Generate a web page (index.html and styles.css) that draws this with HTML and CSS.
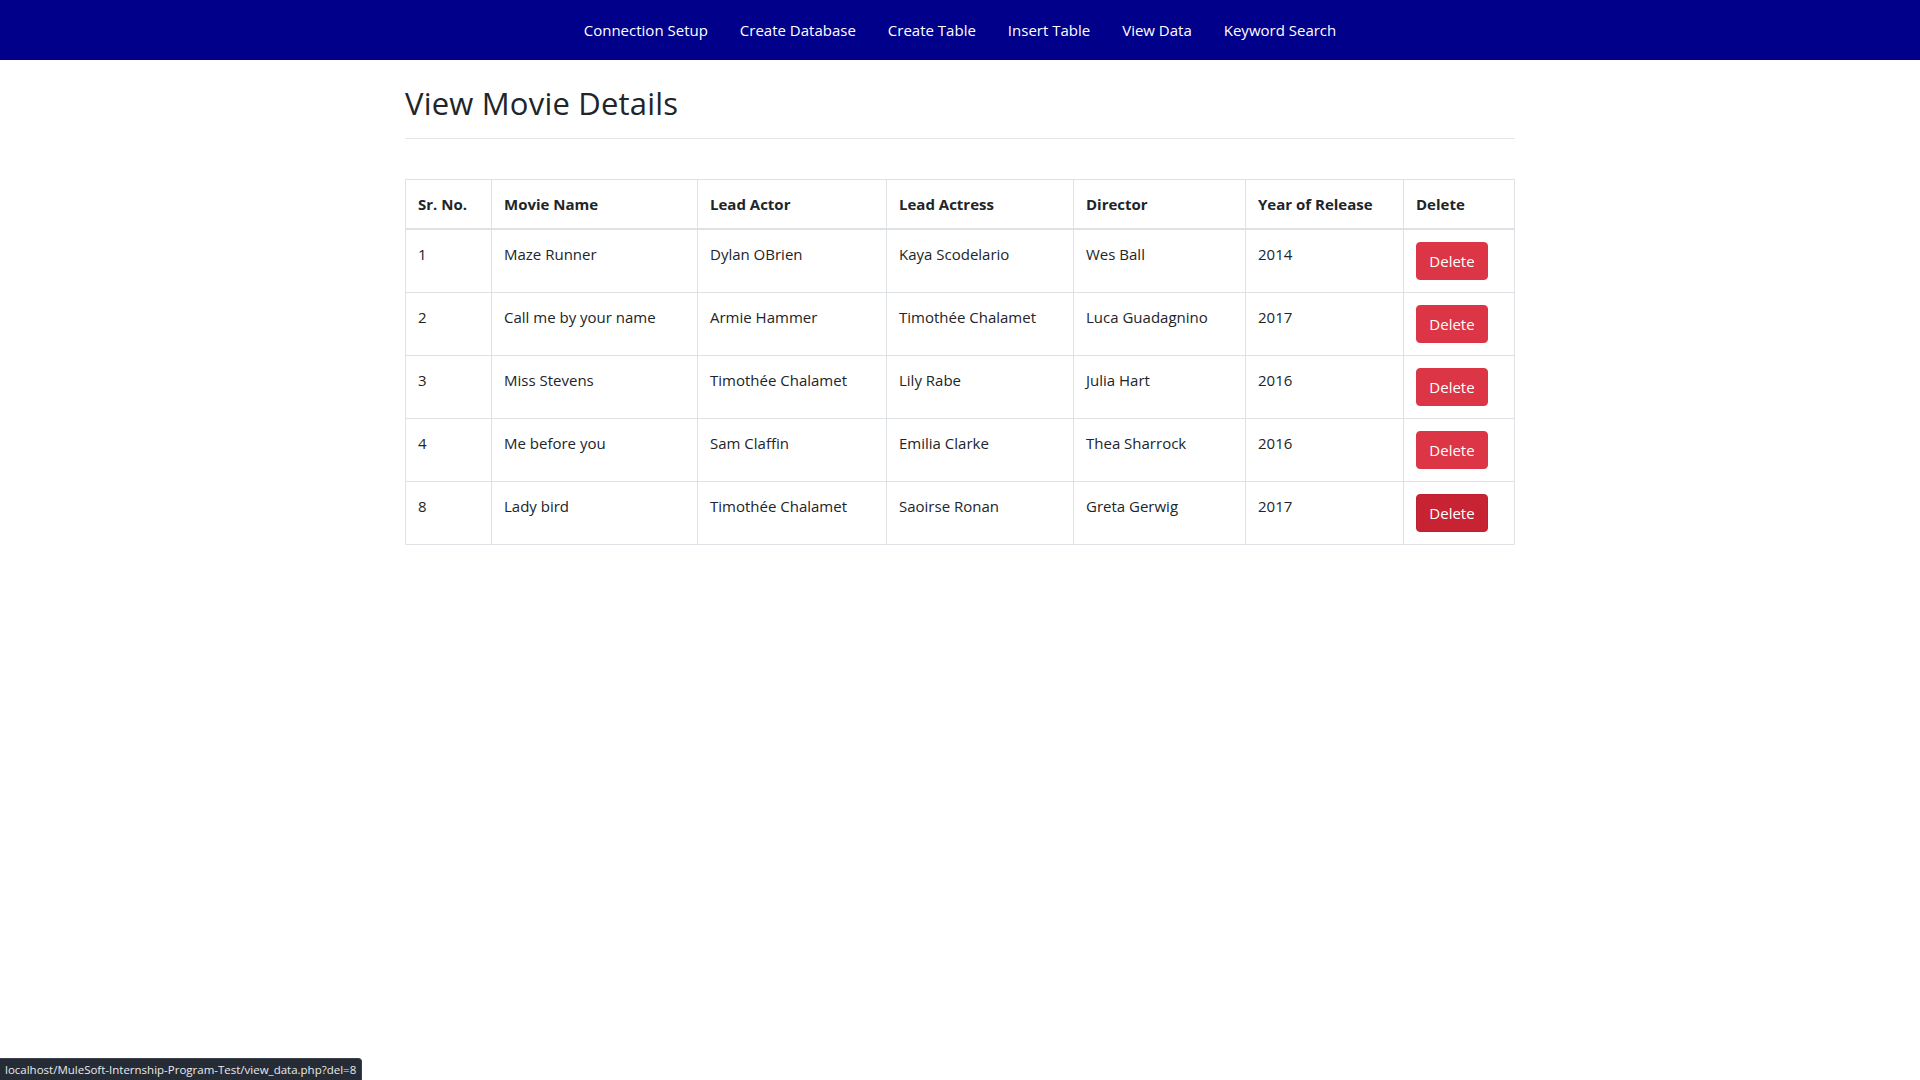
FILE: index.html
```html
<!DOCTYPE html>
<html lang="en">
<head>
<meta charset="utf-8">
<title>View Data</title>
<link rel="stylesheet" href="styles.css">
</head>
<body>
<nav class="navbar">
  <ul class="nav">
    <li><a href="#" class="nav-link">Connection Setup</a></li>
    <li><a href="#" class="nav-link">Create Database</a></li>
    <li><a href="#" class="nav-link">Create Table</a></li>
    <li><a href="#" class="nav-link">Insert Table</a></li>
    <li><a href="#" class="nav-link">View Data</a></li>
    <li><a href="#" class="nav-link">Keyword Search</a></li>
  </ul>
</nav>
<main class="container">
  <h2 class="title">View Movie Details</h2>
  <hr class="rule">
  <table class="table">
    <colgroup>
      <col class="c1"><col class="c2"><col class="c3"><col class="c4"><col class="c5"><col class="c6"><col class="c7">
    </colgroup>
    <thead>
      <tr>
        <th>Sr. No.</th>
        <th>Movie Name</th>
        <th>Lead Actor</th>
        <th>Lead Actress</th>
        <th>Director</th>
        <th>Year of Release</th>
        <th>Delete</th>
      </tr>
    </thead>
    <tbody>
      <tr>
        <td>1</td><td>Maze Runner</td><td>Dylan OBrien</td><td>Kaya Scodelario</td><td>Wes Ball</td><td>2014</td>
        <td><a href="#" class="btn">Delete</a></td>
      </tr>
      <tr>
        <td>2</td><td>Call me by your name</td><td>Armie Hammer</td><td>Timothée Chalamet</td><td>Luca Guadagnino</td><td>2017</td>
        <td><a href="#" class="btn">Delete</a></td>
      </tr>
      <tr>
        <td>3</td><td>Miss Stevens</td><td>Timothée Chalamet</td><td>Lily Rabe</td><td>Julia Hart</td><td>2016</td>
        <td><a href="#" class="btn">Delete</a></td>
      </tr>
      <tr>
        <td>4</td><td>Me before you</td><td>Sam Claffin</td><td>Emilia Clarke</td><td>Thea Sharrock</td><td>2016</td>
        <td><a href="#" class="btn">Delete</a></td>
      </tr>
      <tr>
        <td>8</td><td>Lady bird</td><td>Timothée Chalamet</td><td>Saoirse Ronan</td><td>Greta Gerwig</td><td>2017</td>
        <td><a href="#" class="btn btn-hover">Delete</a></td>
      </tr>
    </tbody>
  </table>
</main>
<div class="statusbar">localhost/MuleSoft-Internship-Program-Test/view_data.php?del=8</div>
</body>
</html>
```

FILE: styles.css
```css
* { box-sizing: border-box; }

html, body {
  margin: 0;
  padding: 0;
  background: #fff;
}

body {
  font-family: "Open Sans", "Noto Sans", sans-serif;
  font-size: 15px;
  line-height: 24px;
  color: #212529;
}

.navbar {
  height: 60px;
  background: #00008b;
  display: flex;
  justify-content: center;
  align-items: center;
}

.nav {
  list-style: none;
  margin: 0;
  padding: 0;
  display: flex;
}

.nav-link {
  display: block;
  padding: 0 16px;
  line-height: 60px;
  color: #fff;
  text-decoration: none;
  font-size: 15px;
}

.container {
  width: 1140px;
  margin: 0 auto;
  padding: 0 15px;
}

.title {
  margin: 24px 0 16px;
  font-size: 31px;
  line-height: 38.4px;
  font-weight: 500;
  letter-spacing: 0.2px;
  color: #212529;
}

.rule {
  margin: 0;
  border: 0;
  border-top: 1px solid rgba(0, 0, 0, 0.1);
  height: 0;
}

.table {
  width: 1109px;
  margin-top: 40px;
  border-collapse: collapse;
  table-layout: fixed;
  border: 1px solid #dee2e6;
}

.c1 { width: 86px; }
.c2 { width: 206px; }
.c3 { width: 189px; }
.c4 { width: 187px; }
.c5 { width: 172px; }
.c6 { width: 158px; }
.c7 { width: 111px; }

.table th,
.table td {
  padding: 12px;
  border: 1px solid #dee2e6;
  text-align: left;
  vertical-align: top;
  white-space: nowrap;
}

.table th {
  vertical-align: bottom;
  border-bottom: 2px solid #dee2e6;
  font-weight: 700;
}

.btn {
  display: inline-block;
  width: 72px;
  height: 38px;
  line-height: 36px;
  text-align: center;
  color: #fff;
  background: #dc3545;
  border: 1px solid #dc3545;
  border-radius: 4px;
  text-decoration: none;
  font-size: 15px;
  vertical-align: top;
}

.btn-hover {
  background: #c82333;
  border-color: #bd2130;
}

.statusbar {
  position: fixed;
  left: 0;
  bottom: 0;
  height: 22px;
  width: 362px;
  padding: 0 5px;
  background: #262c36;
  border-top: 1px solid #3a414c;
  border-right: 1px solid #3a414c;
  border-top-right-radius: 4px;
  color: #e8eaed;
  font-size: 11.5px;
  line-height: 21px;
  white-space: nowrap;
  overflow: hidden;
}
```
